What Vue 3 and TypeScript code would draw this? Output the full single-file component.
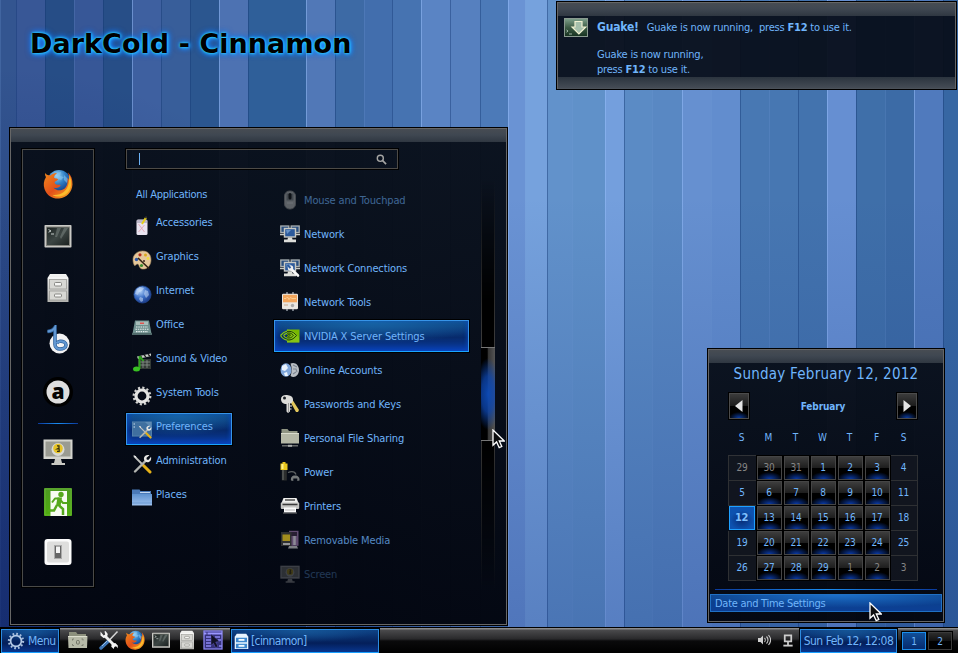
<script setup lang="ts">
interface Stripe { w: number; c: string; edge: string }
interface Entry { icon: string; label: string; fade?: string; active?: boolean }
interface Day { n: number; kind: string }

const L = 'rgba(150,190,250,.5)'
const D = 'rgba(20,55,115,.42)'
const F = 'rgba(120,160,220,.22)'

const stripes: Stripe[] = [
  { w: 16, c: '#335590', edge: F }, { w: 29, c: '#385796', edge: D },
  { w: 29, c: '#264d86', edge: D }, { w: 29, c: '#375797', edge: F },
  { w: 29, c: '#274e87', edge: D }, { w: 29, c: '#3e60a0', edge: L },
  { w: 29, c: '#385e9a', edge: D }, { w: 29, c: '#2b568f', edge: D },
  { w: 29, c: '#4d72b2', edge: L }, { w: 58, c: '#2f5f99', edge: D },
  { w: 29, c: '#5178b7', edge: L }, { w: 29, c: '#3d6aa5', edge: D },
  { w: 28, c: '#426ead', edge: F }, { w: 29, c: '#4673b1', edge: D },
  { w: 29, c: '#5a84c4', edge: L }, { w: 30, c: '#5680bf', edge: D },
  { w: 28, c: '#4c7ab8', edge: D }, { w: 17, c: '#6a93d4', edge: L },
  { w: 22, c: '#76a2dd', edge: F }, { w: 25, c: '#6292cb', edge: D },
  { w: 33, c: '#6091c9', edge: F }, { w: 19, c: '#749fdd', edge: L },
  { w: 28, c: '#5b8bc5', edge: D }, { w: 30, c: '#5988c3', edge: F },
  { w: 29, c: '#6690d0', edge: L }, { w: 29, c: '#628dce', edge: F },
  { w: 29, c: '#4878b3', edge: D }, { w: 29, c: '#4777b2', edge: F },
  { w: 29, c: '#4373ae', edge: D }, { w: 29, c: '#668fd2', edge: L },
  { w: 29, c: '#3f6fa9', edge: D }, { w: 29, c: '#3c6ba6', edge: F },
  { w: 29, c: '#507abd', edge: L }, { w: 15, c: '#3767a3', edge: D },
]

const favourites: Entry[] = ['firefox', 'terminal', 'cabinet', 'banshee', 'amazon'].map(icon => ({ icon, label: '' }))
const session: Entry[] = ['screen', 'logout', 'switch'].map(icon => ({ icon, label: '' }))

const categories: Entry[] = [
  { icon: 'accessories', label: 'Accessories' },
  { icon: 'graphics', label: 'Graphics' },
  { icon: 'internet', label: 'Internet' },
  { icon: 'office', label: 'Office' },
  { icon: 'media', label: 'Sound & Video' },
  { icon: 'gear', label: 'System Tools' },
  { icon: 'preferences', label: 'Preferences', active: true },
  { icon: 'admin', label: 'Administration' },
  { icon: 'places', label: 'Places' },
]

const apps: Entry[] = [
  { icon: 'mouse', label: 'Mouse and Touchpad', fade: 'fade-half' },
  { icon: 'network', label: 'Network' },
  { icon: 'netconn', label: 'Network Connections' },
  { icon: 'nettools', label: 'Network Tools' },
  { icon: 'nvidia', label: 'NVIDIA X Server Settings', active: true },
  { icon: 'online', label: 'Online Accounts' },
  { icon: 'keys', label: 'Passwords and Keys' },
  { icon: 'share', label: 'Personal File Sharing' },
  { icon: 'power', label: 'Power' },
  { icon: 'printer', label: 'Printers' },
  { icon: 'removable', label: 'Removable Media', fade: 'fade-light' },
  { icon: 'screen', label: 'Screen', fade: 'fade-deep' },
]

const launchers = ['folder', 'tools', 'firefox', 'terminal', 'cabinet', 'desktop']
const weekdays = ['S', 'M', 'T', 'W', 'T', 'F', 'S']

const days: Day[] = Array.from({ length: 35 }, (_, i) => {
  const n = i < 3 ? 29 + i : i > 31 ? i - 31 : i - 2
  const col = i % 7
  const kinds = [col === 0 || col === 6 ? 'flat' : 'key']
  if (i < 3 || i > 31) kinds.push('other')
  if (col === 6) kinds.push('last')
  if (i === 14) kinds.push('today')
  return { n, kind: kinds.join(' ') }
})
</script>

<template>
  <div class="desktop">
    <div class="wallpaper">
      <div v-for="(s, i) in stripes" :key="i" class="stripe"
        :style="{ width: s.w + 'px', backgroundColor: s.c, borderLeftColor: s.edge }"></div>
      <div class="shade"></div>
    </div>

    <svg class="defs" aria-hidden="true">
      <defs>
        <linearGradient id="gFox" x1="0" y1="0" x2="1" y2="1"><stop offset="0" stop-color="#f08a1c" /><stop offset=".5" stop-color="#e2501a" /><stop offset="1" stop-color="#f9b021" /></linearGradient>
        <radialGradient id="gGlobe" cx=".4" cy=".25" r=".8"><stop offset="0" stop-color="#9bd8fa" /><stop offset=".45" stop-color="#2f7fc4" /><stop offset="1" stop-color="#0d2c78" /></radialGradient>
        <radialGradient id="gBall" cx=".35" cy=".3" r=".8"><stop offset="0" stop-color="#b4d4fb" /><stop offset=".5" stop-color="#3c6fc6" /><stop offset="1" stop-color="#132f7c" /></radialGradient>
        <linearGradient id="gSilver" x1="0" y1="0" x2="0" y2="1"><stop offset="0" stop-color="#f4f4f2" /><stop offset="1" stop-color="#b4b4b0" /></linearGradient>
        <linearGradient id="gDark" x1="0" y1="0" x2="1" y2="1"><stop offset="0" stop-color="#1d2422" /><stop offset=".5" stop-color="#3d4644" /><stop offset="1" stop-color="#1c2221" /></linearGradient>
        <linearGradient id="gBlue" x1="0" y1="0" x2="0" y2="1"><stop offset="0" stop-color="#5f92cf" /><stop offset="1" stop-color="#9fc2ee" /></linearGradient>
        <linearGradient id="gGreen" x1="0" y1="0" x2="0" y2="1"><stop offset="0" stop-color="#4c9a22" /><stop offset="1" stop-color="#4fae0e" /></linearGradient>
        <linearGradient id="gGuake" x1="0" y1="0" x2="0" y2="1"><stop offset="0" stop-color="#7fa18c" /><stop offset=".5" stop-color="#3c5b45" /><stop offset="1" stop-color="#163220" /></linearGradient>
      </defs>
      <symbol id="firefox" viewBox="0 0 30 30">
        <circle cx="16" cy="12.500" r="11.500" fill="url(#gGlobe)" />
        <path d="M13 4l5-1-1 4 4 1-3 3-4-2zM21 6l4 4-1 4-3-3z" fill="#8ccbf3" opacity=".55" />
        <path d="M2 4c0 2 .3 3 1 4C.5 12 .3 16 1.500 20 4 27 10 30 16 29.500c8-.7 13-6.500 13.500-14 .2-5-1.500-9.500-4.500-12 1 2.500 1.500 5 1.300 8-1-1.500-1-2-2-3 1 5-.3 9.500-3.300 11.500-3.500 2.300-8.500 1.500-10.500-1.500 2.500 1 5 .5 6.500-1.200.8-.8.6-1.800-.5-1.600-2.500.6-4.500-.5-5-2.200.4-1.500 2.500-1.200 3.500-3 .3-1-2.500-.8-4-2 .3-2 1.500-3.300 3-4.500-2.500-.2-5 .8-6.500 2.500C5.500 6.300 3.500 6 2 4z" fill="url(#gFox)" />
        <path d="M26.500 6c3 7 2.500 15-4 19.500-4 2.600-9 2.800-13 .5 9 .7 14.500-4 16-11 .5-3 .8-6 1-9z" fill="#fbbc2c" />
      </symbol>
      <symbol id="terminal" viewBox="0 0 30 30">
        <rect x="1.500" y="4" width="27" height="22.500" rx=".8" fill="#c9c9c5" /><rect x="3" y="5.500" width="24" height="19.500" fill="#85857f" />
        <rect x="4" y="6.500" width="22" height="17.500" fill="url(#gDark)" /><path d="M14 7h4l-4 9h-2zM21 7h4l-7 11-1-2z" fill="#7d8783" opacity=".5" />
        <path d="M5.500 8.500l2.500 1.500-2.500 1.200M8 13h3" stroke="#d7dedb" stroke-width=".9" fill="none" />
      </symbol>
      <symbol id="cabinet" viewBox="0 0 30 30">
        <path d="M7 1h16l2.500 4v24H4.500V5z" fill="url(#gSilver)" /><path d="M5 5h20" stroke="#fff" />
        <g fill="#d8d8d4" stroke="#9b9b97" stroke-width=".8"><rect x="6.500" y="6.500" width="17" height="9.500" /><rect x="6.500" y="18" width="17" height="9" /></g>
        <g fill="#f6f6f4" stroke="#888884"><rect x="11.500" y="9.500" width="7" height="3.500" rx="1" /><rect x="11.500" y="21" width="7" height="3" rx="1" /></g>
      </symbol>
      <symbol id="banshee" viewBox="0 0 30 30">
        <circle cx="16.500" cy="18.500" r="10" fill="#f2f2f3" />
        <path d="M4.500 6.500c4-.3 6-1.500 7.500-4v17c0 3 2.500 4.500 5 4.500 3 0 6-1.200 6-4s-3-4-6-3.700c-1.800.2-2.700 1-3.300 2" stroke="#2f6099" stroke-width="3.600" fill="none" />
        <path d="M4.500 6.500c4-.3 6-1.500 7.500-4v17c0 3 2.500 4.500 5 4.500 3 0 6-1.200 6-4s-3-4-6-3.700c-1.800.2-2.700 1-3.300 2" stroke="#6197d2" stroke-width="2.200" fill="none" />
      </symbol>
      <symbol id="amazon" viewBox="0 0 30 30">
        <circle cx="15" cy="15" r="15" fill="#000" /><circle cx="15" cy="15" r="11.500" fill="#dedede" />
        <text x="15" y="21.500" text-anchor="middle" font-family="Open Sans, sans-serif" font-weight="800" font-size="21" fill="#050505">a</text>
      </symbol>
      <symbol id="screen" viewBox="0 0 30 30">
        <rect x=".5" y="2.500" width="29" height="19.500" fill="#d4d4ce" /><rect x="2.500" y="4.500" width="25" height="15" fill="#9a9b92" />
        <path d="M12 22h6l1 4h3v2H8.500v-2H11z" fill="#c9c9c3" />
        <circle cx="15" cy="12.500" r="6.500" fill="#d9d9d4" /><circle cx="15" cy="11.500" r="4.800" fill="#e6c325" />
        <path d="M14 8.800h2v2.200l-1.800 1h2v2.300h-2.200" stroke="#363111" stroke-width="1.200" fill="none" />
      </symbol>
      <symbol id="logout" viewBox="0 0 30 30">
        <rect x="1" y="1" width="28" height="28" rx="1" fill="url(#gGreen)" /><rect x="2" y="2" width="26" height="26" fill="none" stroke="#74bb48" opacity=".6" />
        <rect x="7.500" y="4" width="16.500" height="25" fill="#f7fbf2" />
        <circle cx="18" cy="7.500" r="2.700" fill="#55a81d" />
        <path d="M9 15.500l3-4h4l4 4.500h4" stroke="#55a81d" stroke-width="2" fill="none" stroke-linejoin="round" />
        <path d="M14.500 10.500h4.500l-1.500 8.500h-4.500z" fill="#55a81d" />
        <path d="M16 18.500l4 3.500v6M14 18l-3 5.500H5" stroke="#55a81d" stroke-width="2.500" fill="none" />
      </symbol>
      <symbol id="switch" viewBox="0 0 30 30">
        <rect x="1.500" y="2" width="27" height="26" rx="3" fill="#fbfbfb" /><rect x="4" y="4.500" width="22" height="21" rx="2" fill="#dededd" />
        <rect x="11.500" y="8.500" width="7" height="13" fill="#666" stroke="#aaa" /><rect x="13" y="9.500" width="4" height="6.500" fill="#f4f4f4" />
      </symbol>

      <symbol id="accessories" viewBox="0 0 20 20">
        <rect x="4.500" y="3.500" width="11" height="15.500" rx="1.500" fill="#e9e4f0" /><path d="M5 4h10v3H5z" fill="#bdb7c9" />
        <path d="M10 8l4-6.500" stroke="#e5cf18" stroke-width="2" /><path d="M13.200 2l1.300-1.500" stroke="#333" stroke-width="1.500" />
        <path d="M6.500 8l6 8M12.500 9l-6 7" stroke="#df8fa0" stroke-width=".8" opacity=".8" />
      </symbol>
      <symbol id="graphics" viewBox="0 0 20 20">
        <path d="M10.500 1C5 1 1 5 1 9.500c0 2 .3 4 1.500 6 1 .5 1.500-1.500 3-1.500 2 0 1 4 4.500 5 5 .8 9-3.500 9-9S16 1 10.500 1z" fill="#e5c79b" stroke="#b08e60" stroke-width=".6" />
        <circle cx="8" cy="4.800" r="1.600" fill="#b22c1c" /><circle cx="13.500" cy="5" r="1.500" fill="#dca81b" /><circle cx="16" cy="8.500" r="1.400" fill="#efdc3c" />
        <circle cx="4.500" cy="9.500" r="1.700" fill="#2d57a8" /><circle cx="9.500" cy="15.500" r="1.600" fill="#3b8d2f" /><path d="M6 8l11 10.500" stroke="#332313" stroke-width="1.600" /><circle cx="12" cy="11" r="1" fill="#3c2d20" />
      </symbol>
      <symbol id="internet" viewBox="0 0 20 20">
        <circle cx="10.500" cy="10.500" r="8.600" fill="url(#gBall)" stroke="#29509c" stroke-width=".6" />
        <path d="M5 5l3-2 4 1-2 3-3 1-1 3-3-1zM13 6l3 1 1 4-3 3-2-4zM8 13l3 1v3l-2 1-2-3z" fill="#d8e8fb" opacity=".5" />
      </symbol>
      <symbol id="office" viewBox="0 0 20 20">
        <path d="M3 2.500h14l2.500 13H.5z" fill="#70918f" /><path d="M4 3.500h12v3.500H4z" fill="#a8bdb9" /><path d="M8 4.500h4v1.500H8z" fill="#e0554f" />
        <path d="M4 9h12M3.500 11.300h13M4 13.600h12" stroke="#e4eded" stroke-width="1.100" stroke-dasharray="1.500 .8" /><path d="M0 15h20v2H0z" fill="#516b6b" />
      </symbol>
      <symbol id="media" viewBox="0 0 20 20">
        <path d="M6 7h13v10H6z" fill="#333a36" /><path d="M5 4.500l14-3v2.500l-13 3z" fill="#c9cfca" /><path d="M8 3.800l2 2M12 3l2 2M16 2.200l2 2" stroke="#222" stroke-width="1.300" />
        <path d="M8 10h10M8 13h10M11 8v8M15 8v8" stroke="#8b948d" stroke-width=".8" /><path d="M7.500 4v13M7.500 4l4 5" stroke="#2ca31a" stroke-width="1.900" fill="none" /><ellipse cx="4.500" cy="17" rx="3.500" ry="2.500" fill="#38c222" />
      </symbol>
      <symbol id="gear" viewBox="0 0 20 20">
        <circle cx="10" cy="10" r="8.300" fill="none" stroke="#d2d2d0" stroke-width="2.200" stroke-dasharray="2.200 2.146" /><circle cx="10" cy="10" r="6" fill="none" stroke="#e4e4e2" stroke-width="3.200" />
      </symbol>
      <symbol id="wrench" viewBox="0 0 20 20">
        <path d="M2 2l10 10" stroke="#bfc1bd" stroke-width="1.800" /><path d="M1 1.200l3 1 .5 2.300z" fill="#eee" />
        <path d="M11.500 11.500l6.500 6.500" stroke="#e6b118" stroke-width="3" stroke-linecap="round" />
        <path d="M3 17.500L14 6.500" stroke="#b2b4b0" stroke-width="2.400" stroke-linecap="round" /><path d="M17.500 1.300l-3 2.400.2 2 2 .1 2.300-3c.7 3-.8 5.500-3.500 5.500-1.500 0-3.500-1.200-3.600-3.500 0-2.500 2.600-4.500 5.600-3.500z" fill="#e7e7e5" />
      </symbol>
      <symbol id="admin" viewBox="0 0 20 20"><use href="#wrench" /></symbol>
      <symbol id="preferences" viewBox="0 0 20 20">
        <rect x="0" y="1.500" width="20" height="15" fill="#3f6f9f" /><rect x=".5" y="2" width="19" height="14" fill="none" stroke="#6c94b8" stroke-width=".6" opacity=".7" /><path d="M1.500 4h1.500M1.500 7h1.500" stroke="#cfe0ef" /><path d="M13 2h6v6z" fill="#7aa3c8" opacity=".5" />
        <use href="#wrench" x="6" y="5" width="14" height="14" />
      </symbol>
      <symbol id="places" viewBox="0 0 20 20">
        <path d="M0 1.500h7.500l1 1.500H19V9H0z" fill="#4b7ab8" /><path d="M8 4h10v1H8z" fill="#c3d7ee" /><path d="M0 6h20v11.500H0z" fill="url(#gBlue)" /><path d="M0 15h20" stroke="#6d9ad2" />
      </symbol>

      <symbol id="mouse" viewBox="0 0 20 20">
        <rect x="4.500" y="1" width="11" height="18" rx="5" fill="#aaabaa" stroke="#7c7c7c" /><path d="M6.500 3.500h7v7h-7z" fill="#777a7b" /><rect x="8.500" y="3" width="3" height="6.500" rx="1.500" fill="#111" /><path d="M7 13h6" stroke="#ddd" stroke-width=".7" />
      </symbol>
      <symbol id="network" viewBox="0 0 20 20">
        <g fill="#2b5080" stroke="#a9b0b3" stroke-width="1.300"><rect x=".8" y="2" width="8" height="6.500" /><rect x="11.200" y="2" width="8" height="6.500" /></g>
        <path d="M0 10.500h5M15 10.500h5" stroke="#c9cbc8" stroke-width="1.600" />
        <rect x="4.500" y="4.500" width="11" height="8.500" fill="#2c5a9c" stroke="#c6c8c4" stroke-width="1.400" /><path d="M6 6h5l-4 4z" fill="#6792c8" /><path d="M8 13.500h4l.5 2H16v2.800H4v-2.800h3.500z" fill="#dddeda" />
      </symbol>
      <symbol id="netconn" viewBox="0 0 20 20"><use href="#network" /><path d="M9.500 9.500l8.500 8" stroke="#fafafa" stroke-width="2.600" stroke-linecap="round" /><circle cx="10.500" cy="10" r="2.700" fill="#eee" /><path d="M7.500 7l3 3" stroke="#2c5a9c" stroke-width="2" /></symbol>
      <symbol id="nettools" viewBox="0 0 20 20">
        <path d="M7 0v19M13 0v19" stroke="#8d959e" stroke-width="1.500" /><rect x="2" y="1.800" width="16" height="15.500" rx="1.200" fill="#e9e6e1" /><rect x="3" y="2.800" width="14" height="7.500" fill="#f2a55c" />
        <path d="M4 6.500h2l1.500-1.500 1.500 2.500 1.500-2 1.500 1h4" stroke="#ffd59b" fill="none" stroke-width=".8" /><circle cx="12.500" cy="13.500" r="1.700" fill="#aaa" /><path d="M4 13h4" stroke="#c9a88a" />
      </symbol>
      <symbol id="nvidia" viewBox="0 0 20 20">
        <path d="M7 3.500h12.500v13H7z" fill="#77b900" /><path d="M7 3.500C14 4 17 8 19 12v4.500H7z" fill="#96cf2a" opacity=".5" />
        <path d="M.8 9.300C3.500 6.200 6 5.300 9 5.300c3.500 0 6 2.200 7.500 4.200C14.500 12 12 14 9 14 5 14 2.500 12 .8 9.300zM4 9.500c2-2.300 3.700-2.500 5-2.500 2 0 3.500 1.300 4.300 2.400C12 11 11 12 9 12c-2.500 0-4-1-5-2.500zM7 9.500c1-1 2-1.500 3.500-.3-.7 1-2.500 1.500-3.500.3z" fill="none" stroke="#1b3a05" stroke-width="1" />
        <path d="M.5 9.500C3 6.500 5 5.500 7 5.200M.5 9.500c1.500 2.500 4 4.200 6.500 4.600M3.500 9.500c1-1.300 2.300-2 3.500-2.200M3.500 9.500c1 1.400 2.300 2.200 3.500 2.500" stroke="#86c61c" fill="none" stroke-width="1.200" />
      </symbol>
      <symbol id="online" viewBox="0 0 20 20">
        <ellipse cx="6" cy="10" rx="5.500" ry="6.800" fill="#7fa6da" /><path d="M2 6l4-2 2 4-3 3-3-1zM4 13l3-1 1 4-3 0z" fill="#eaf3fd" /><path d="M10.500 3.500c4-2 8.500 1 8.500 6.500s-4.500 8.500-8.500 6c1.500-4 1.500-8.500 0-12.500z" fill="#b9bec4" /><path d="M13 5l4 2M13 9h3l1 3M13 14l3-2" stroke="#7c8692" stroke-width="1.100" fill="none" />
      </symbol>
      <symbol id="keys" viewBox="0 0 20 20">
        <path d="M12 5l7 11-1 2h-2l-5-9z" fill="#e2c75c" /><path d="M1 5c0-3 3-4.500 6-4 3 .3 6 1.500 6 4.500 0 2.500-1.500 4-3 4v8l-2 1.500-1.500-1.500V10C3 10 1 8 1 5z" fill="#dcdcd9" /><circle cx="4.500" cy="4" r="1.500" fill="#1c2026" /><path d="M8.500 9v9" stroke="#888" stroke-width=".8" /><path d="M10 12h2M10 15h1.500" stroke="#eee" />
      </symbol>
      <symbol id="share" viewBox="0 0 20 20">
        <path d="M1.500 1h6l1.500 2h8.500v6h-16z" fill="#8f9482" /><path d="M1 5h18v10.500H1z" fill="#b5b8a6" /><path d="M1 5.500h18" stroke="#dadccd" /><path d="M2 17.800h16" stroke="#777a78" stroke-width="1.300" /><path d="M8 17.800h4" stroke="#a9acaa" stroke-width="2" />
      </symbol>
      <symbol id="power" viewBox="0 0 20 20">
        <path d="M2.500 0h3v1.500h2V8h-7V1.500h2z" fill="#eac81e" /><path d="M1.500 2h2v5h-2z" fill="#fff08a" /><path d="M1.800 8h5v10.500h-5z" fill="#2b2d2d" /><path d="M3 8v10" stroke="#6d716f" />
        <path d="M8 10.500c4-1.500 7-.5 8 2" stroke="#5f6364" stroke-width="1.300" fill="none" /><path d="M11 18.500c-.5-3 1-5 4-5s5 2 4.500 5l-2.200.5v-2.500h-4V19z" fill="#75797a" />
      </symbol>
      <symbol id="printer" viewBox="0 0 20 20">
        <path d="M3.500 2h13l2 5h-17z" fill="#f0f0ee" /><path d="M5 4h10" stroke="#333" stroke-width="1.300" /><rect x=".8" y="6.500" width="18.400" height="6.500" rx="1" fill="#c5c5c3" /><path d="M2.500 8.500h15" stroke="#3b3b3b" stroke-width="1.500" /><path d="M4 11.500h12v5H4z" fill="#fafafa" /><path d="M5 14h10" stroke="#b8b8b8" /><path d="M3 17h14" stroke="#777" />
      </symbol>
      <symbol id="removable" viewBox="0 0 20 20">
        <rect x="9" y=".8" width="9.500" height="15" fill="#80638f" /><rect x="11" y="2" width="6" height="4" fill="#35273e" /><path d="M14.500 6v9" stroke="#bab6c1" stroke-width="2.500" /><rect x="1" y="2" width="10.500" height="14" fill="#3e3e3b" /><rect x="2.500" y="4.500" width="7.500" height="6.500" fill="#d8b921" /><path d="M3 14h7" stroke="#d6d6d6" stroke-width="1.800" /><path d="M9 16h8l1 2.500H8z" fill="#a6a7aa" />
      </symbol>

      <symbol id="folder" viewBox="0 0 20 20">
        <path d="M1 2h7l1.500 2H18v5H1z" fill="#8c907d" /><path d="M0 6h19.500l-.5 12H.5z" fill="#b7baa8" /><path d="M0 6.500h19" stroke="#dcdece" /><path d="M6 9H4.500v1.500M6 15.500H4.500v-1.500M13.500 9H15v1.500M13.500 15.500H15v-1.500" stroke="#7d8072" fill="none" /><rect x="8.500" y="10.500" width="2.800" height="3.600" rx="1" fill="none" stroke="#6d7062" />
      </symbol>
      <symbol id="tools" viewBox="0 0 20 20">
        <path d="M18.500 1.500l-9 9.500" stroke="#d6d6d6" stroke-width="1.500" /><path d="M9.500 11l-7.500 7" stroke="#3f76b5" stroke-width="3.400" stroke-linecap="round" /><path d="M3 16l5-5" stroke="#98c0e8" />
        <path d="M5.500 5.500l10 10" stroke="#eceded" stroke-width="2.800" /><path d="M1.500 1.500v4l3 2.500 3.500-1 .8-3L6.500 1l-1 .5.700 3-1.500 1zM18.800 18.500v-3l-2.500-2.500-3.500.8-.5 3 2.500 2.200.5-2 1.700-.8 1.500 1.500z" fill="#f3f3f3" />
      </symbol>
      <symbol id="desktop" viewBox="0 0 20 20">
        <rect x="1" y="1" width="18" height="18" fill="#35317a" stroke="#8a86f2" stroke-width="1.300" /><path d="M1 3.500h18" stroke="#9a96ff" stroke-width="2" stroke-dasharray="2.500 1 20 1" />
        <g stroke="#8a86f2" stroke-width="1.300"><path d="M3 7h5M3 10h5M3 13h5M3 16h5M12 7h5M15 10h3M16 16h3" /></g>
        <path d="M8 4l8.500 7.500-3.800.6 2.300 4.400-2.400 1.100-2.100-4.300L8 15.500z" fill="#121126" stroke="#6f6bcf" stroke-width=".4" />
      </symbol>
      <symbol id="cog" viewBox="0 0 20 20">
        <circle cx="10" cy="10" r="7.900" fill="none" stroke="#a8bfdd" stroke-width="2.400" stroke-dasharray="1.900 2.236" /><circle cx="10" cy="10" r="6" fill="none" stroke="#b4cae6" stroke-width="1.900" />
      </symbol>
      <symbol id="bluecab" viewBox="0 0 20 20">
        <path d="M4.500 1h11L18 4.500v14.300H2V4.500z" fill="#e9f4ff" /><g fill="#3d87cf"><path d="M3.500 5.500h13v5.500h-13zM3.500 12.500h13V18h-13z" /></g><g fill="#f3faff"><rect x="6.500" y="7" width="7" height="2.200" /><rect x="6.500" y="14" width="7" height="2.200" /></g>
      </symbol>
      <symbol id="guake" viewBox="0 0 24 19">
        <rect x=".5" y=".5" width="23" height="18" fill="url(#gGuake)" stroke="#8a9a90" /><path d="M11 3.500h7V9h3.800l-6.900 7L8 9h3z" fill="#a5bfab" stroke="#f0f1d2" stroke-width="1.200" /><path d="M2.500 12l1.500 1-1.500 1.200M5 16h3" stroke="#c2d6c6" stroke-width=".8" fill="none" />
      </symbol>
      <symbol id="pointer" viewBox="0 0 13 20">
        <path d="M1 1v15.200l3.600-3.300 2.600 5.800 2.600-1.200-2.500-5.500h5z" fill="#0c0d0f" stroke="#fff" stroke-width="1.300" />
      </symbol>
      <symbol id="lens" viewBox="0 0 12 12"><circle cx="4.700" cy="4.700" r="3.300" fill="none" stroke="#a5a5a3" stroke-width="1.500" /><path d="M7 7l4 4" stroke="#a5a5a3" stroke-width="1.800" /></symbol>
      <symbol id="volume" viewBox="0 0 14 12"><path d="M1 4h2.500L6 1.500v9L3.500 8H1z" fill="#d0d0d0" /><path d="M7.500 4c1 1 1 3 0 4M9.500 2.500c2 2 2 5 0 7M11.500 1c2.500 3 2.500 7 0 10" stroke="#c9c9c9" fill="none" stroke-width="1.100" /></symbol>
      <symbol id="wired" viewBox="0 0 12 14"><path d="M2.500 1.500h7v6.500h-7zM6 8v4" stroke="#cdcdcd" stroke-width="1.900" fill="none" /><path d="M1 12.500h10" stroke="#cdcdcd" stroke-width="2" /></symbol>
    </svg>

    <h1 class="title">DarkCold - Cinnamon</h1>

    <section class="panel notice">
      <div class="band"></div>
      <div class="notice-body">
        <svg class="guake"><use href="#guake" /></svg>
        <div class="notice-text">
          <p><b class="who">Guake!</b>Guake is now running,&nbsp; press <b>F12</b> to use it.</p>
          <p class="detail">Guake is now running,<br />press <b>F12</b> to use it.</p>
        </div>
      </div>
      <div class="band foot"></div>
    </section>

    <section class="panel menu">
      <div class="band"></div>
      <div class="menu-body">
        <div class="favs">
          <div v-for="f in favourites" :key="f.icon" class="fav"><svg><use :href="'#' + f.icon" /></svg></div>
          <div class="rule"></div>
          <div v-for="f in session" :key="f.icon" class="fav short"><svg><use :href="'#' + f.icon" /></svg></div>
        </div>
        <div class="main">
          <div class="search"><span class="caret"></span><svg><use href="#lens" /></svg></div>
          <div class="lists">
            <div class="cats">
              <div class="all">All Applications</div>
              <div v-for="c in categories" :key="c.label" class="row" :class="{ active: c.active }">
                <svg><use :href="'#' + c.icon" /></svg><span>{{ c.label }}</span>
              </div>
            </div>
            <div class="apps">
              <div v-for="a in apps" :key="a.label" class="row" :class="[a.fade, { active: a.active }]">
                <svg><use :href="'#' + a.icon" /></svg><span>{{ a.label }}</span>
              </div>
            </div>
            <div class="track"><div class="thumb"></div></div>
          </div>
        </div>
      </div>
    </section>

    <section class="panel calendar">
      <div class="band"></div>
      <div class="date">Sunday February 12, 2012</div>
      <div class="nav">
        <button class="arrow"><svg viewBox="0 0 10 12"><path d="M8.500 0v12L1 6z" /></svg></button>
        <b>February</b>
        <button class="arrow"><svg viewBox="0 0 10 12"><path d="M1.500 0v12L9 6z" /></svg></button>
      </div>
      <div class="week"><span v-for="(w, i) in weekdays" :key="i">{{ w }}</span></div>
      <div class="days"><div v-for="(d, i) in days" :key="i" class="day" :class="d.kind">{{ d.n }}</div></div>
      <div class="rule"></div>
      <div class="settings">Date and Time Settings</div>
    </section>

    <footer class="taskbar">
      <div class="start"><svg><use href="#cog" /></svg><span>Menu</span></div>
      <div class="launch"><svg v-for="l in launchers" :key="l" :class="'l-' + l"><use :href="'#' + l" /></svg></div>
      <div class="task"><svg><use href="#bluecab" /></svg><span>[cinnamon]</span></div>
      <div class="tray">
        <svg class="vol"><use href="#volume" /></svg>
        <svg class="net"><use href="#wired" /></svg>
      </div>
      <div class="clock">Sun Feb 12, 12:08</div>
      <div class="ws on">1</div>
      <div class="ws">2</div>
    </footer>

    <svg class="pointer over-menu"><use href="#pointer" /></svg>
    <svg class="pointer over-cal"><use href="#pointer" /></svg>
  </div>
</template>

<style>
body { overflow: hidden; background: #102a62; }
</style>

<style scoped>
.desktop {
  position: relative; width: 958px; height: 653px; overflow: hidden;
  display: flex; flex-direction: column; justify-content: flex-end;
  font: 11px/14px "DejaVu Sans Condensed", "DejaVu Sans", sans-serif;
  color: #70b5fb; box-sizing: border-box;
}
.desktop * { box-sizing: border-box; }
p, h1 { margin: 0; }
.wallpaper { position: absolute; inset: 0; display: flex; }
.stripe { flex: none; height: 100%; border-left: 1px solid; }
.shade {
  position: absolute; inset: 0;
  background: linear-gradient(to bottom, rgba(20,55,135,0) 30%, rgba(15,45,125,.3) 100%),
    radial-gradient(ellipse 480px 620px at 0 105%, rgba(5,15,80,.62), rgba(5,15,80,0));
}
.defs { position: absolute; top: 0; left: 0; width: 0; height: 0; }

.title {
  position: absolute; left: 30px; top: 27px; color: #000; white-space: nowrap;
  font: bold 27px/34px "DejaVu Sans", sans-serif; letter-spacing: .05px;
  text-shadow: 0 0 3px #3ff, 1px 1px 4px #29f, 0 0 6px #17f, 0 0 7px #17f;
}

.panel {
  position: absolute; border: 1px solid #666; outline: 1px solid #000;
  display: flex; flex-direction: column;
  background: linear-gradient(rgba(8,14,24,.95), rgba(2,5,14,.97));
}
.band { flex: none; height: 13px; background: linear-gradient(#4a4f55, #424a54 45%, #313943); opacity: .95; }

.notice { left: 557px; top: 2px; width: 399px; height: 87px; background: rgba(7,14,25,.94); }
.band.foot { background: linear-gradient(#2d3640, #4a515a); height: 12px; }
.notice-body { flex: 1; display: flex; padding: 2px 0 0 6px; gap: 9px; }
.guake { width: 24px; height: 19px; flex: none; }
.notice-text { padding-top: 2px; white-space: nowrap; letter-spacing: -.2px; }
.who { font-size: 12px; margin-right: 8px; }
.detail { margin-top: 12px; line-height: 15px; }

.menu { left: 10px; top: 128px; width: 497px; height: 497px; }
.menu-body { flex: 1; display: flex; gap: 32px; padding: 7px 0 0 11px; }
.favs {
  width: 72px; height: 438px; border: 1px solid #4a4a48; outline: 1px solid #000; padding-top: 8px;
  display: flex; flex-direction: column; align-items: center;
}
.fav { height: 52px; display: flex; align-items: center; }
.fav.short { height: 50px; }
.fav svg { width: 30px; height: 30px; }
.favs .rule { width: 40px; height: 1px; margin: 5px 0 3px; }
.rule { flex: none; background: linear-gradient(90deg, #0b3a9c, #1a8cf0, #0b3a9c); }
.search {
  width: 272px; height: 20px; border: 1px solid #4d4b47; outline: 1px solid #000; padding: 0 10px 0 12px;
  display: flex; align-items: center; justify-content: space-between;
}
.caret { width: 1px; height: 12px; background: #6cb2f5; }
.search svg { width: 11px; height: 11px; }
.lists { display: flex; align-items: flex-start; letter-spacing: -.13px; }
.cats { width: 106px; margin-right: 42px; padding-top: 19px; }
.all { height: 21px; padding-left: 10px; white-space: nowrap; letter-spacing: -.3px; }
.row {
  height: 32px; margin-bottom: 2px; display: flex; align-items: center; gap: 4px;
  padding-left: 5px; border: 1px solid transparent; white-space: nowrap;
}
.row svg { flex: none; width: 20px; height: 20px; }
.cats .row svg { margin-top: 1px; }
.cats .row span { margin-top: -5px; }
.apps .row span { margin-top: 2px; }
.apps .row svg { margin-top: -1px; }
.apps { width: 195px; padding-top: 15px; }
.active {
  border-color: #3794e8; border-bottom-color: #1aa5ff; outline: 1px solid #000;
  background: radial-gradient(ellipse 60% 75% at 50% 0, rgba(25,105,170,.9), rgba(20,90,170,0)), linear-gradient(#11508f, #072a6c 55%, #0a3c9f);
  box-shadow: inset 0 -5px 6px -3px #0a45c4, inset 4px 0 6px -3px #0b4bbb, inset -3px 0 5px -3px #0b4bbb;
}
.fade-half { opacity: .52; }
.fade-light { opacity: .75; }
.fade-deep { opacity: .27; }
.track {
  width: 14px; height: 410px; margin: 10px 0 0 12px; padding-top: 168px;
  background: linear-gradient(rgba(0,0,0,0), #000 30%, #000 65%, rgba(0,0,0,0));
  border: solid; border-width: 0 1px; border-image: linear-gradient(rgba(60,60,60,0), #3b3b3b 40%, #3b3b3b 60%, rgba(60,60,60,0)) 1;
}
.thumb {
  height: 94px; border-top: 1px solid #777; border-bottom: 1px solid #777; margin: 0 -1px;
  background: radial-gradient(ellipse 13px 36px at 50% 50%, rgba(12,75,185,.95) 0, rgba(13,72,180,.75) 50%, rgba(10,50,130,0)), linear-gradient(90deg, #000 45%, #333 50%, #555);
}

.calendar { left: 708px; top: 349px; width: 236px; height: 273px; }
.date { margin-top: 1px; text-align: center; font-size: 15px; line-height: 20px; white-space: nowrap; letter-spacing: .25px; }
.nav { display: flex; justify-content: space-between; align-items: center; padding: 0 26px 0 20px; margin-top: 9px; letter-spacing: -.1px; }
.nav b { font-size: 10px; padding-top: 2px; }
.arrow {
  width: 20px; height: 26px; padding: 0; border: 1px solid #4b4b4b; outline: 1px solid #000;
  display: flex; align-items: center; justify-content: center;
  background: radial-gradient(ellipse 10px 6px at 50% 100%, #0b3ca0, rgba(0,20,80,0)), linear-gradient(#3b3b3b, #1b1b1b 50%, #000 50%);
}
.arrow svg { width: 10px; height: 12px; fill: #e4e4e4; }
.week { display: flex; margin: 12px 0 0 19px; }
.week span { width: 27px; text-align: center; font-size: 10px; }
.days { display: grid; grid-template-columns: 28px repeat(6, 27px); grid-auto-rows: 25px; margin: 10px 0 0 19px; width: 190px; border-top: 1px solid #303236; height: 126px; }
.day { text-align: center; font-size: 10px; letter-spacing: -.3px; }
.flat { border: 1px solid #2e3033; border-top: 0; border-right: 0; background: rgba(20,24,33,.8); line-height: 24px; padding-right: 1px; }
.flat.last { border-left: 0; border-right: 1px solid #2e3033; }
.key {
  border: 1px solid #454545; outline: 1px solid #000; margin: 0 1px 1px; line-height: 21px; padding-right: 1px;
  background: radial-gradient(ellipse 13px 7px at 50% 100%, #0a3aa6, rgba(0,20,80,0)), linear-gradient(#3d3d3d, #1d1d1d 50%, #000 50%);
}
.other { color: #858585; }
.today {
  font-weight: bold; font-size: 11px; line-height: 22px; border: 1px solid #1fa0ff; margin: 0 1px 1px;
  background: radial-gradient(ellipse 12px 10px at 50% 60%, #072c76, #0d52b0); color: #7fc0ff;
}
.calendar .rule { height: 1px; margin: 8px 6px 0; }
.settings {
  height: 18px; margin: 4px 1px 0; padding-left: 4px; line-height: 17px; border: 1px solid #2070c4; letter-spacing: -.28px;
  background: radial-gradient(ellipse 65% 80% at 55% 0, #1c6fca, rgba(20,90,180,0)), linear-gradient(#0c4188, #0c3f95); white-space: nowrap;
}

.taskbar {
  position: relative; height: 26px; display: flex; align-items: flex-start; border-top: 1px solid #000;
  background: linear-gradient(#8b8b8b 1px, #4a4a4c 2px, #29292b 11px, #0a0a0b 13px, #000);
}
.start, .task, .clock, .ws {
  border: 1px solid #2c8be0; border-bottom-color: #19a0ff; outline: 1px solid #000; display: flex; align-items: center; white-space: nowrap;
  background: radial-gradient(ellipse 50% 55% at 50% 0, #155596, rgba(20,80,150,0)), linear-gradient(#0e4285, #041f5a 60%, #08368e);
}
.start, .task, .clock { font-size: 12px; }
.start { width: 58px; height: 24px; margin-left: 1px; padding-left: 5px; gap: 3px; letter-spacing: -.5px; margin-top: 1px; }
.start svg { width: 18px; height: 18px; margin-top: -1px; }
.launch { display: flex; align-items: center; height: 24px; margin-left: 9px; }
.launch svg { width: 20px; height: 20px; margin-right: 6px; }
.launch .l-folder { margin-right: 11px; }
.launch .l-desktop { margin-right: 8px; }
.task { width: 148px; height: 24px; margin-top: 1px; padding-left: 1px; gap: 1px; letter-spacing: -.6px; }
.task svg { width: 17px; height: 17px; }
.tray { margin-left: auto; display: flex; align-items: center; height: 24px; gap: 11px; margin-right: 6px; }
.vol { width: 14px; height: 12px; }
.net { width: 12px; height: 13px; }
.clock { width: 97px; height: 24px; margin-top: 1px; justify-content: center; letter-spacing: -.5px; }
.ws { width: 24px; height: 18px; margin: 4px 0 0 5px; padding-top: 2px; justify-content: center; font-size: 10px; border-color: #3a3a3a; background: linear-gradient(#2c2c2c, #111 50%, #000 50%); }
.ws.on { border-color: #1b8eeb; background: linear-gradient(#104f99, #062b6e); }
.ws + .ws { margin-left: 2px; margin-right: 6px; }
.pointer { position: absolute; width: 13px; height: 20px; }
.over-menu { left: 492px; top: 429px; }
.over-cal { left: 869px; top: 602px; }
</style>
